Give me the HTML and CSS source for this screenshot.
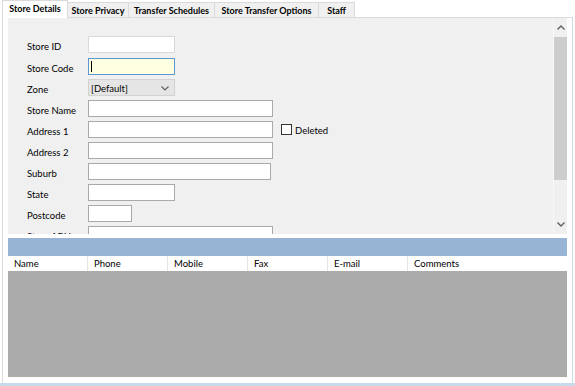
FILE: index.html
```html
<!DOCTYPE html>
<html>
<head>
<meta charset="utf-8">
<link rel="stylesheet" href="styles.css">
</head>
<body>
<div class="window">
  <div class="tabs">
    <div class="tab active w1">Store Details</div>
    <div class="tab w2">Store Privacy</div>
    <div class="tab w3">Transfer Schedules</div>
    <div class="tab w4">Store Transfer Options</div>
    <div class="tab w5">Staff</div>
  </div>
  <div class="pane">
    <div class="details">
      <div class="form">
        <div class="row first"><span class="lbl">Store ID</span><div class="field ro w87"></div></div>
        <div class="row"><span class="lbl">Store Code</span><div class="field focus w87"><span class="caret"></span></div></div>
        <div class="row"><span class="lbl">Zone</span><div class="select w87"><span>[Default]</span><svg class="chev" width="8" height="5" viewBox="0 0 8 5"><polyline points="0.5,0.5 4,4 7.5,0.5" fill="none" stroke="#606060" stroke-width="1.2"/></svg></div></div>
        <div class="row"><span class="lbl">Store Name</span><div class="field w185"></div></div>
        <div class="row"><span class="lbl">Address 1</span><div class="field w185"></div><span class="check"></span><span class="chk-lbl">Deleted</span></div>
        <div class="row"><span class="lbl">Address 2</span><div class="field w185"></div></div>
        <div class="row"><span class="lbl">Suburb</span><div class="field w183"></div></div>
        <div class="row"><span class="lbl">State</span><div class="field w87"></div></div>
        <div class="row"><span class="lbl">Postcode</span><div class="field w44"></div></div>
        <div class="row"><span class="lbl">Store ABNs</span><div class="field w185"></div></div>
      </div>
      <div class="vscroll">
        <div class="sbtn"><svg width="8" height="5" viewBox="0 0 8 5"><polyline points="0.5,4.5 4,1 7.5,4.5" fill="none" stroke="#606060" stroke-width="1.4"/></svg></div>
        <div class="thumb"></div>
        <div class="track"></div>
        <div class="sbtn"><svg width="8" height="5" viewBox="0 0 8 5"><polyline points="0.5,0.5 4,4 7.5,0.5" fill="none" stroke="#606060" stroke-width="1.4"/></svg></div>
      </div>
    </div>
    <div class="bluebar"></div>
    <div class="grid-head">
      <div class="col">Name</div>
      <div class="col">Phone</div>
      <div class="col">Mobile</div>
      <div class="col">Fax</div>
      <div class="col">E-mail</div>
      <div class="col last">Comments</div>
    </div>
    <div class="grid-body"></div>
  </div>
  <div class="bottomline"></div>
</div>
</body>
</html>
```
FILE: styles.css
```css
html, body {
  margin: 0;
  padding: 0;
  background: #fff;
}
body {
  font-family: Lato, "Open Sans", sans-serif;
  font-size: 9.5px;
  color: #000;
}
.window {
  width: 575px;
  height: 386px;
  display: flex;
  flex-direction: column;
  overflow: hidden;
}
.tabs {
  display: flex;
  align-items: flex-end;
  height: 17px;
  padding-left: 2px;
  position: relative;
  z-index: 2;
}
.tab {
  box-sizing: border-box;
  height: 15px;
  border: 1px solid #dadada;
  border-bottom: none;
  margin-left: -1px;
  background: #f0f0f0;
  font-weight: bold;
  font-size: 9px;
  display: flex;
  align-items: center;
  justify-content: center;
  padding-top: 1px;
}
.tab.active {
  height: 18px;
  margin-bottom: -1px;
  margin-left: 0;
  background: #fff;
  padding-top: 0;
  padding-bottom: 3px;
}
.w1 { width: 66px; }
.w2 { width: 62px; }
.w3 { width: 87px; }
.w4 { width: 105px; }
.w5 { width: 37px; }

.pane {
  box-sizing: border-box;
  margin-left: 2px;
  width: 571px;
  height: 366px;
  border: 1px solid #dadada;
  border-right-color: #cfd9e4;
  border-bottom: none;
  padding: 0 5px 6px 5px;
  display: flex;
  flex-direction: column;
}
.details {
  height: 216px;
  background: #f0f0f0;
  display: flex;
}
.form {
  flex: 1;
  overflow: hidden;
  padding: 18px 0 0 19px;
  display: flex;
  flex-direction: column;
  gap: 4px;
}
.row {
  display: flex;
  align-items: center;
  height: 17px;
  flex: none;
}
.row.first { margin-bottom: 1px; }
.lbl {
  width: 61px;
  padding-top: 3px;
  flex: none;
}
.field {
  box-sizing: border-box;
  height: 17px;
  background: #fff;
  border: 1px solid #a9a9a9;
  flex: none;
  position: relative;
}
.field.ro { border-color: #d9d9d9; }
.field.focus {
  background: #ffffe1;
  border-color: #5b97d3;
}
.caret {
  position: absolute;
  left: 2px;
  top: 2px;
  width: 1px;
  height: 11px;
  background: #000;
}
.w87 { width: 87px; }
.w185 { width: 185px; }
.w183 { width: 183px; }
.w44 { width: 44px; }
.select {
  box-sizing: border-box;
  height: 17px;
  background: #e5e5e5;
  border: 1px solid #d2d2d2;
  display: flex;
  align-items: center;
  justify-content: space-between;
  padding: 1px 5px 0 2px;
  flex: none;
}
.chev { display: block; }
.check {
  box-sizing: border-box;
  width: 11px;
  height: 11px;
  border: 1px solid #333;
  background: #fff;
  margin-left: 8px;
  flex: none;
}
.chk-lbl {
  margin-left: 3px;
  padding-top: 1px;
}
.vscroll {
  width: 13px;
  border-left: 1px solid #f8f8f8;
  display: flex;
  flex-direction: column;
}
.sbtn {
  height: 19px;
  display: flex;
  align-items: center;
  justify-content: center;
}
.thumb {
  height: 143px;
  background: #cdcdcd;
}
.track { flex: 1; }

.bluebar {
  margin-top: 4px;
  height: 18px;
  background: #98b4d4;
}
.grid-head {
  display: flex;
  height: 15px;
  background: #fff;
}
.col {
  box-sizing: border-box;
  width: 80px;
  border-right: 1px solid #e5e5e5;
  padding-left: 6px;
  display: flex;
  align-items: center;
}
.col.last {
  flex: 1;
  border-right: none;
}
.grid-body {
  flex: 1;
  background: #ababab;
}
.bottomline {
  height: 3px;
  background: #c8dbed;
}
```
